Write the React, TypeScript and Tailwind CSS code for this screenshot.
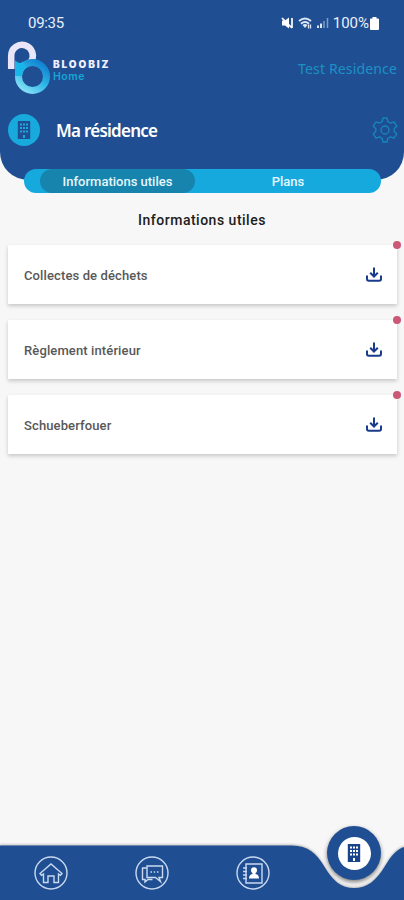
import { ReactNode } from 'react';

const documents = ['Collectes de déchets', 'Règlement intérieur', 'Schueberfouer'];

function Logo() {
  return (
    <svg width="44" height="56" viewBox="0 0 44 56" fill="none">
      <defs>
        <linearGradient id="ring" x1="36" y1="24" x2="18" y2="50" gradientUnits="userSpaceOnUse">
          <stop offset="0" stopColor="#1283d0" />
          <stop offset="0.5" stopColor="#2cb5e6" />
          <stop offset="1" stopColor="#7edcf5" />
        </linearGradient>
      </defs>
      <path d="M4.200 29V15.500a10.800 10.800 0 1 1 19.500 6.500" stroke="#e9e6fa" strokeWidth="6.500" />
      <path d="M8 36V20.500q6 5.500 14-.5l7-.5v5L12 38z" fill="#19b5e8" />
      <circle cx="25.500" cy="36.500" r="11" fill="#1f4f92" />
      <circle cx="25.500" cy="36.500" r="14" stroke="url(#ring)" strokeWidth="7" />
      <path d="M11.500 36c0-6 2-9 6-11.700" stroke="#19b5e8" strokeWidth="7" />
    </svg>
  );
}

function StatusIcons() {
  return (
    <svg width="50" height="14" viewBox="0 0 50 14" fill="none">
      <path d="M1 4.500h3l4-3v11l-4-3H1z" fill="#fff" />
      <path d="M1 2l10 10M11 2v10" stroke="#fff" strokeWidth="1.700" />
      <path d="M18 5q6-5 12 0M20 7.800q4-3.500 8 0" stroke="#dce6f5" strokeWidth="2" />
      <path d="M21.500 9q2.500-2 5 0L24 12z" fill="#dce6f5" />
      <path d="M27.500 8.500v4M29.500 8.500v4" stroke="#dce6f5" strokeWidth="1.300" />
      <path d="M37 12V9.500M40 12V7.500" stroke="#dce6f5" strokeWidth="2" />
      <path d="M43 12V5M46.500 12V2" stroke="#7f9cc9" strokeWidth="1.500" />
    </svg>
  );
}

function BuildingIcon({ size, color, windows }: { size: number; color: string; windows: string }) {
  return (
    <svg width={size} height={size} viewBox="0 0 18 18">
      <path d="M2.800 0h12.400v18H2.800z" fill={color} />
      <path
        d="M5 2.500h2v2H5zM8 2.500h2v2H8zM11 2.500h2v2h-2zM5 6h2v2H5zM8 6h2v2H8zM11 6h2v2h-2zM5 9.500h2v2H5zM8 9.500h2v2H8zM11 9.500h2v2h-2zM8 14h2v3H8z"
        fill={windows}
      />
    </svg>
  );
}

function GearIcon() {
  return (
    <svg width="26" height="26" viewBox="0 0 26 26" fill="none" stroke="#1687bc" strokeWidth="1.300" strokeLinejoin="round">
      <path d="M11 1h4l.8 3.500 2.700 1.600 3.500-1.300 2.800 4.400-2.600 2.400v2.800l2.600 2.400-2.800 4.400-3.500-1.300-2.700 1.600L15 25h-4l-.8-3.500-2.700-1.600L4 21.200l-2.800-4.400 2.600-2.400v-2.800L1.200 9.200 4 4.800l3.500 1.300 2.700-1.600z" />
      <circle cx="13" cy="13" r="4" />
    </svg>
  );
}

function DownloadIcon() {
  return (
    <svg width="18" height="18" viewBox="0 0 18 18" fill="none" stroke="#183b8c" strokeWidth="2">
      <path d="M9 1.500V10M5.200 6.700L9 10.500l3.800-3.800" />
      <path d="M2 9.500V13q0 1.800 1.800 1.800h10.400q1.800 0 1.800-1.800V9.500" />
    </svg>
  );
}

function NavButton({ children }: { children: ReactNode }) {
  return (
    <button className="size-[34px]">
      <svg width="34" height="34" viewBox="0 0 34 34" fill="none" stroke="#c9d9f2" strokeWidth="1.400">
        <circle cx="17" cy="17" r="16" />
        {children}
      </svg>
    </button>
  );
}

export default function App() {
  return (
    <div className="flex h-[900px] w-[404px] flex-col overflow-hidden bg-[#f7f7f7] font-['Roboto',sans-serif]">
      <header className="h-[180px] shrink-0 rounded-b-[28px] bg-[#1f4f92]">
        <div className="flex h-9 items-end justify-between pl-7 pr-[25px] text-[#e9effa]">
          <span className="mb-1 text-[15px] leading-[18px] tracking-[-0.3px]">09:35</span>
          <div className="mb-1 flex h-[18px] items-center">
            <StatusIcons />
            <span className="ml-[2px] text-[15px] leading-[18px]">100%</span>
            <svg className="ml-px" width="9" height="13" viewBox="0 0 9 13">
              <path d="M2.500 0h4v1.500H8q1 0 1 1V12q0 1-1 1H1q-1 0-1-1V2.500q0-1 1-1h1.500z" fill="#fff" />
            </svg>
          </div>
        </div>

        <div className="flex h-[66px] items-start justify-between px-[7px]">
          <div className="flex pt-1">
            <Logo />
            <div className="ml-[2px] pt-[18px] font-['Inter',sans-serif]">
              <div className="text-[10px] font-black leading-[13px] tracking-[1.900px] text-[#f0edff]">BLOOBIZ</div>
              <div className="text-[10.500px] font-semibold leading-[12px] tracking-[0.500px] text-[#18a5d5]">Home</div>
            </div>
          </div>
          <span className="mt-[23px] font-['Noto_Sans',sans-serif] text-[14px] leading-5 tracking-[0.150px] text-[#1e8fc4]">
            Test Residence
          </span>
        </div>

        <div className="flex h-14 items-center pl-2 pr-[6px]">
          <div className="flex size-8 items-center justify-center rounded-full bg-[#18a9dd]">
            <BuildingIcon size={18} color="#1f4f92" windows="#18a9dd" />
          </div>
          <h1 className="ml-4 flex-1 pt-[2px] font-['Noto_Sans',sans-serif] text-[17px] font-semibold leading-6 tracking-[-0.750px] text-white">
            Ma résidence
          </h1>
          <GearIcon />
        </div>
      </header>

      <div className="-mt-[11px] mr-[23px] ml-6 flex h-6 shrink-0 rounded-full bg-[#16a9de] pl-4 text-[13px] font-medium leading-[25px] text-[#e4f6fc]">
        <div className="w-[155px] rounded-full bg-[#1684ad] text-center">Informations utiles</div>
        <div className="flex-1 text-center">Plans</div>
      </div>

      <main className="flex-1">
        <h2 className="mt-[17px] text-center text-[14px] font-medium leading-5 tracking-[0.500px] text-[#202020]">
          Informations utiles
        </h2>
        <ul className="mt-[15px] flex flex-col gap-4 pl-2 pr-[7px]">
          {documents.map((name) => (
            <li
              key={name}
              className="relative flex h-[59px] items-center justify-between bg-white pl-4 pr-[14px] shadow-[0_2px_4px_rgba(0,0,0,0.2)]"
            >
              <span className="pt-[2px] text-[13px] font-medium tracking-[0.120px] text-[#585858]">{name}</span>
              <DownloadIcon />
              <span className="absolute -right-1 -top-1 size-2 rounded-full bg-[#cb5877]" />
            </li>
          ))}
        </ul>
      </main>

      <nav className="relative h-[75px] shrink-0">
        <svg className="absolute inset-0 drop-shadow-[0_-1px_1px_rgba(0,0,0,0.25)]" width="404" height="75" viewBox="0 0 404 75">
          <path d="M0 20.500H292C308 20.500 317 29 324 41C333 56 341 63 354 63C367 63 376 56 385 41C391 31 397 24 404 22V75H0z" fill="#1f4f92" />
        </svg>
        <div className="relative flex gap-[67px] pl-[34px] pt-[31px]">
          <NavButton>
            <path d="M6 17.500L17 8l11 9.500-1.500 1.800-2-1.300v8.500H20V20h-6v6.500H9.500V18l-2 1.300z" />
          </NavButton>
          <NavButton>
            <path d="M12 10h15.500v11.500H24l1.500 4-5-4H12zM12 12H7.500v11.500H10V26l3-2.500h4.500M15.500 16H17M18.700 16h1.500M22 16h1.500" />
          </NavButton>
          <NavButton>
            <path d="M10 8h16v19H10zM7 12h4M7 15.500h4M7 19h4M7 22.500h4" />
            <circle cx="18" cy="14.300" r="3" fill="#fff" stroke="none" />
            <path d="M13 22.500q0-4 3.500-4.500v-2h3v2q3.500.5 3.500 4.500z" fill="#fff" stroke="none" />
          </NavButton>
        </div>
        <button className="absolute left-[327px] top-px flex size-[54px] items-center justify-center rounded-full bg-[#1f4f92] shadow-[0_2px_4px_rgba(0,0,0,0.5)]">
          <span className="flex size-[33px] items-center justify-center rounded-full bg-white">
            <BuildingIcon size={18} color="#1b438b" windows="#ffffff" />
          </span>
        </button>
      </nav>
    </div>
  );
}
